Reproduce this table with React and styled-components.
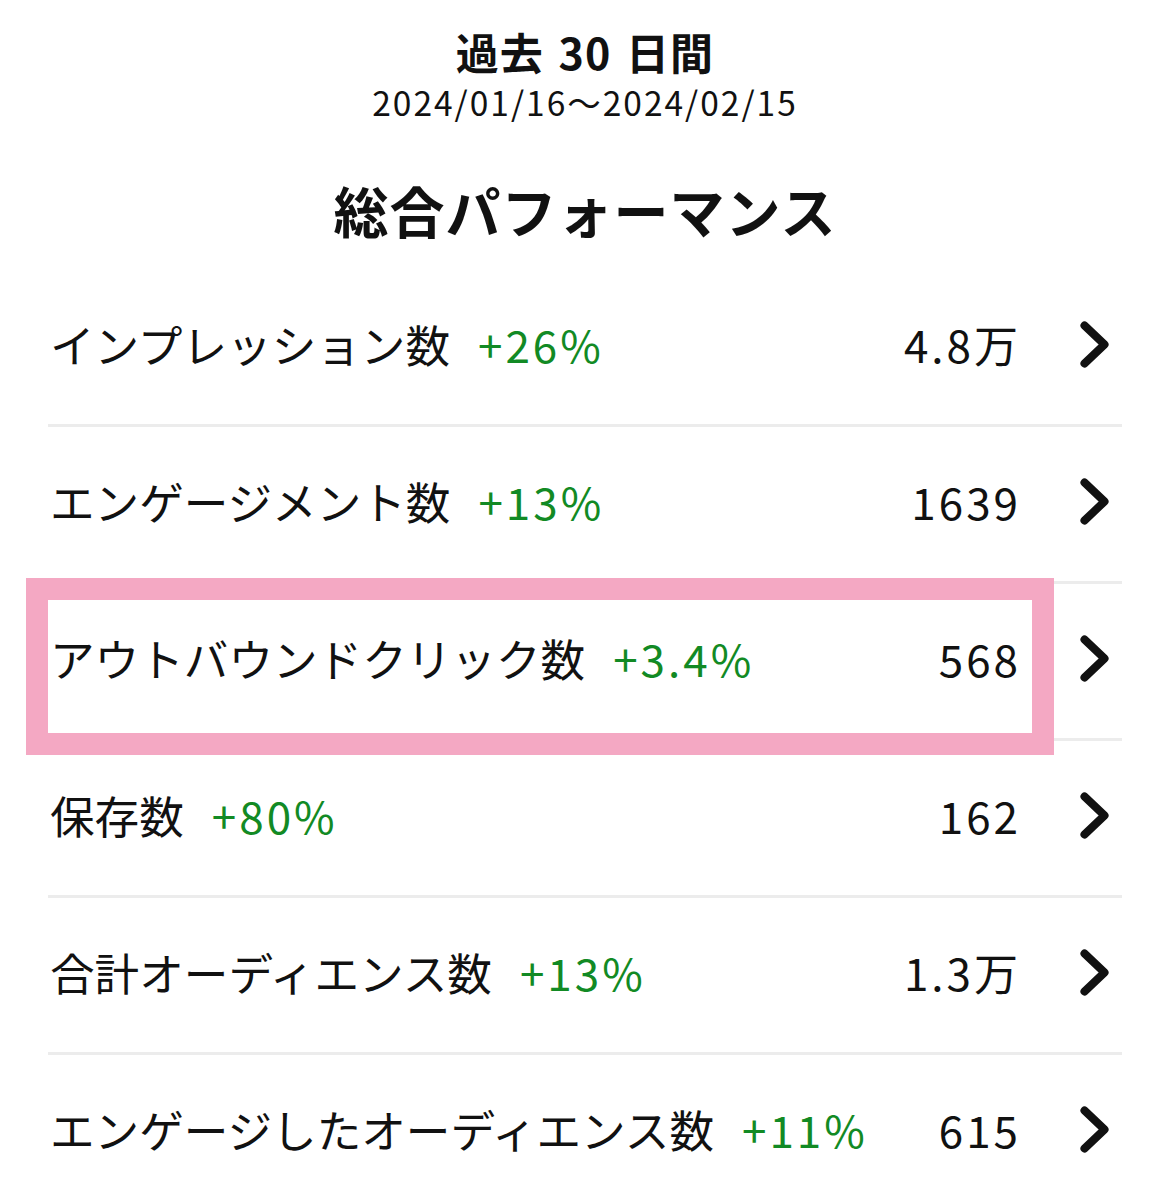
import React from "react";
import styled, { createGlobalStyle } from "styled-components";

const GlobalStyle = createGlobalStyle`
  html, body {
    margin: 0;
    padding: 0;
    background: #ffffff;
  }
  body {
    font-family: "Noto Sans CJK JP", "Noto Sans", sans-serif;
    color: #111111;
  }
`;

const Page = styled.div`
  width: 1170px;
  padding: 25px 48px 0;
  box-sizing: border-box;
`;

const Header = styled.header`
  display: flex;
  flex-direction: column;
  align-items: center;
`;

const Period = styled.div`
  font-size: 43px;
  font-weight: 700;
  line-height: 52px;
  letter-spacing: 1px;
  word-spacing: 4px;
`;

const Range = styled.div`
  margin-top: 2px;
  font-size: 33.5px;
  line-height: 46px;
  letter-spacing: 2px;
`;

const Title = styled.h1`
  margin: 52px 0 0;
  font-size: 55px;
  font-weight: 700;
  line-height: 64px;
  letter-spacing: 1px;
`;

const List = styled.ul`
  list-style: none;
  margin: 29px 0 0;
  padding: 0;
`;

const Row = styled.li`
  position: relative;
  display: flex;
  align-items: center;
  box-sizing: border-box;
  height: ${(p) => (p.$last ? "154px" : "157px")};
  padding-bottom: 6px;
  border-bottom: ${(p) => (p.$last ? "none" : "3px solid #ececec")};
`;

const Label = styled.span`
  font-size: 44.6px;
  line-height: 1;
  padding-left: 2px;
`;

const Change = styled.span`
  margin-left: 28px;
  font-size: 44px;
  line-height: 1;
  color: #128a24;
  letter-spacing: 3px;
`;

const Value = styled.span`
  margin-left: auto;
  margin-right: -3px;
  font-size: 44px;
  line-height: 1;
  letter-spacing: 3px;
`;

const Chevron = styled.svg`
  flex: none;
  width: 29px;
  height: 47px;
  margin: 0 13px 0 62px;
`;

const Highlight = styled.div`
  position: absolute;
  left: -22px;
  right: 68px;
  top: -6px;
  bottom: -17px;
  border: 22px solid #f4a8c3;
  pointer-events: none;
`;

const rows = [
  { label: "インプレッション数", change: "+26%", value: "4.8万" },
  { label: "エンゲージメント数", change: "+13%", value: "1639" },
  { label: "アウトバウンドクリック数", change: "+3.4%", value: "568", marked: true },
  { label: "保存数", change: "+80%", value: "162" },
  { label: "合計オーディエンス数", change: "+13%", value: "1.3万" },
  { label: "エンゲージしたオーディエンス数", change: "+11%", value: "615" },
];

const ChevronIcon = () => (
  <Chevron viewBox="0 0 29 47" fill="none">
    <path
      d="M4.5 4.5 L24.5 23.5 L4.5 42.5"
      stroke="#111111"
      strokeWidth="8"
      strokeLinecap="round"
      strokeLinejoin="round"
    />
  </Chevron>
);

export default function App() {
  return (
    <>
      <GlobalStyle />
      <Page>
        <Header>
          <Period>過去 30 日間</Period>
          <Range>2024/01/16～2024/02/15</Range>
          <Title>総合パフォーマンス</Title>
        </Header>
        <List>
          {rows.map((r, i) => (
            <Row key={r.label} $last={i === rows.length - 1}>
              <Label>{r.label}</Label>
              <Change>{r.change}</Change>
              <Value>{r.value}</Value>
              <ChevronIcon />
              {r.marked && <Highlight />}
            </Row>
          ))}
        </List>
      </Page>
    </>
  );
}
